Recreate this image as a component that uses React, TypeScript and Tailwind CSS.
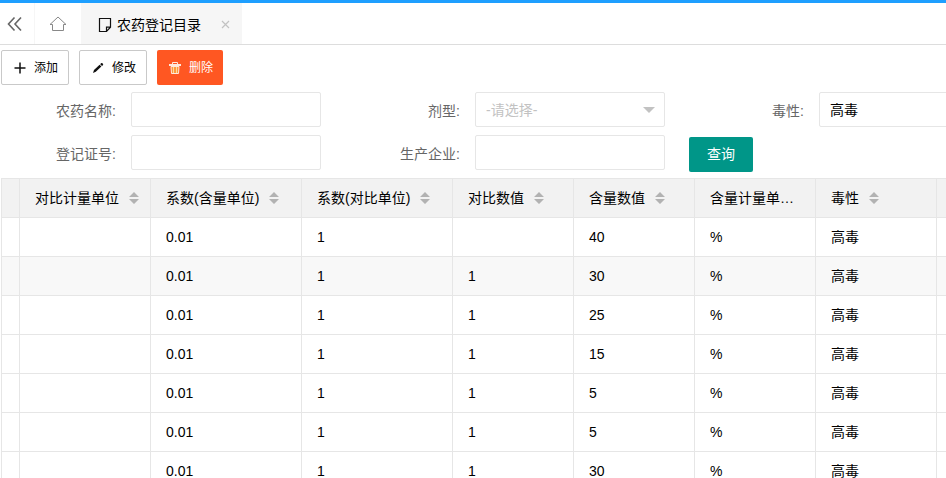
import { ReactNode } from 'react';
import clsx from 'clsx';

interface Column {
  key: keyof Row;
  title: string;
  width: string;
  sortable?: boolean;
}

interface Row {
  compareUnit: string;
  contentFactor: string;
  compareFactor: string;
  compareValue: string;
  contentValue: string;
  contentUnit: string;
  toxicity: string;
}

const columns: Column[] = [
  { key: 'compareUnit', title: '对比计量单位', width: 'w-[131px]', sortable: true },
  { key: 'contentFactor', title: '系数(含量单位)', width: 'w-[151px]', sortable: true },
  { key: 'compareFactor', title: '系数(对比单位)', width: 'w-[151px]', sortable: true },
  { key: 'compareValue', title: '对比数值', width: 'w-[121px]', sortable: true },
  { key: 'contentValue', title: '含量数值', width: 'w-[121px]', sortable: true },
  { key: 'contentUnit', title: '含量计量单位', width: 'w-[121px]', sortable: true },
  { key: 'toxicity', title: '毒性', width: 'w-[121px]', sortable: true },
];

const values: [string, string][] = [
  ['', '40'],
  ['1', '30'],
  ['1', '25'],
  ['1', '15'],
  ['1', '5'],
  ['1', '5'],
  ['1', '30'],
];

const rows: Row[] = values.map(([compareValue, contentValue]) => ({
  compareUnit: '',
  contentFactor: '0.01',
  compareFactor: '1',
  compareValue,
  contentValue,
  contentUnit: '%',
  toxicity: '高毒',
}));

const hoveredRow = 1;

function CollapseIcon() {
  return (
    <svg width="16" height="16" viewBox="0 0 16 16" fill="none" stroke="#666" strokeWidth="1.6">
      <path d="M7.500 1.500 1.500 8l6 6.500M14 1.500 8 8l6 6.500" />
    </svg>
  );
}

function HomeIcon() {
  return (
    <svg width="18" height="16" viewBox="0 0 18 16" fill="none" stroke="#888" strokeWidth="1">
      <path d="M3.500 8.500H1L9 1l8 7.500h-2.500v6h-11z" strokeLinejoin="round" />
    </svg>
  );
}

function NoteIcon() {
  return (
    <svg width="14" height="16" viewBox="0 0 14 16" fill="none" stroke="#111" strokeWidth="1.2">
      <path d="M1.500 1.500h11v8.700l-4 4.300h-7zM12.500 10.200h-4v4.300" />
    </svg>
  );
}

function PlusIcon() {
  return (
    <svg width="12" height="12" viewBox="0 0 12 12" fill="none" stroke="#111" strokeWidth="1.5">
      <path d="M6 .5v11M.5 6h11" />
    </svg>
  );
}

function PencilIcon() {
  return (
    <svg width="12" height="12" viewBox="0 0 12 12" fill="#111">
      <path d="M9 1.300a1 1 0 0 1 1.400 0l.5.5a1 1 0 0 1 0 1.400l-.9.800-1.800-1.800zM7.600 2.700l1.800 1.800-5.600 5.300L1 11l1-2.900z" />
    </svg>
  );
}

function TrashIcon() {
  return (
    <svg width="12" height="12" viewBox="0 0 12 12" fill="none" stroke="#ffe9dc" strokeWidth="1">
      <path d="M2 4.500h8l-.5 7h-7z" fill="#ff9a3c" />
      <path d="M0 3h12" strokeWidth="2" />
      <path d="M3.500 2V.5h5V2" />
      <path d="M4.500 5v6M7.500 5v6" stroke="#ffd9a0" />
    </svg>
  );
}

function SortIcon() {
  return (
    <svg className="ml-2.5 inline-block align-[-1px]" width="10" height="12" viewBox="0 0 10 12" fill="#b2b2b2">
      <path d="M5 0l5 5H0zM0 7h10l-5 5z" />
    </svg>
  );
}

function ToolButton({ icon, children, danger }: { icon: ReactNode; children: ReactNode; danger?: boolean }) {
  return (
    <button
      type="button"
      className={clsx(
        'flex h-[35px] items-center gap-2 rounded-xs pr-2.5 pl-3 text-xs',
        danger ? 'bg-[#ff5722] text-white' : 'border border-[#c9c9c9] bg-white text-black'
      )}
    >
      {icon}
      {children}
    </button>
  );
}

function Field({ id, label, children }: { id: string; label: string; children?: ReactNode }) {
  return (
    <div className="flex shrink-0">
      <label htmlFor={id} className="w-[130px] pr-[15px] text-right leading-[39px] text-[#666]">
        {label}:
      </label>
      {children ?? <input id={id} type="text" className="h-[35px] w-[190px] rounded-xs border border-[#e6e6e6] px-2.5 outline-none" />}
    </div>
  );
}

function Select({ id, value, placeholder }: { id: string; value: string; placeholder?: boolean }) {
  return (
    <div className="relative">
      <select
        id={id}
        defaultValue={value}
        className={clsx(
          'h-[35px] w-[190px] appearance-none rounded-xs border border-[#e6e6e6] bg-white px-2.5 outline-none',
          placeholder ? 'text-[#c2c2c2]' : 'text-black'
        )}
      >
        <option>{value}</option>
      </select>
      <svg className="pointer-events-none absolute top-[15px] right-2.5" width="12" height="6" viewBox="0 0 12 6" fill="#c2c2c2">
        <path d="M0 0h12L6 6z" />
      </svg>
    </div>
  );
}

export default function App() {
  return (
    <div className="h-screen overflow-hidden bg-white font-['Liberation_Sans','Noto_Sans_CJK_SC',sans-serif] text-sm text-black">
      {/* Page tabs */}
      <header className="flex h-[45px] border-t-3 border-b border-t-[#1e9fff] border-b-[#ddd]">
        <button type="button" aria-label="收起" className="flex w-[35px] items-center border-r border-[#f6f6f6] pl-[7px]">
          <CollapseIcon />
        </button>
        <button type="button" aria-label="首页" className="flex w-[46px] items-center justify-center">
          <HomeIcon />
        </button>
        <div className="flex w-[161px] items-center bg-[#f6f6f6] pt-0.5 pr-3 pl-[17px]">
          <NoteIcon />
          <span className="ml-[5px]">农药登记目录</span>
          <button type="button" aria-label="关闭" className="ml-auto">
            <svg width="9" height="9" viewBox="0 0 9 9" fill="none" stroke="#c2c2c2" strokeWidth="1.2">
              <path d="M1 1l7 7M8 1 1 8" />
            </svg>
          </button>
        </div>
      </header>

      <main className="pt-[5px] pl-px">
        <div className="flex gap-2.5">
          <ToolButton icon={<PlusIcon />}>添加</ToolButton>
          <ToolButton icon={<PencilIcon />}>修改</ToolButton>
          <ToolButton icon={<TrashIcon />} danger>
            删除
          </ToolButton>
        </div>

        {/* Search form */}
        <form className="mt-[7px] flex flex-col gap-2">
          <div className="flex h-[35px] gap-6">
            <Field id="name" label="农药名称" />
            <Field id="form" label="剂型">
              <Select id="form" value="-请选择-" placeholder />
            </Field>
            <Field id="toxicity" label="毒性">
              <Select id="toxicity" value="高毒" />
            </Field>
          </div>
          <div className="flex h-[35px] gap-6">
            <Field id="license" label="登记证号" />
            <Field id="company" label="生产企业" />
            <button type="button" className="mt-0.5 h-[35px] shrink-0 rounded-xs bg-[#009688] px-[18px] pb-0.5 text-white">
              查询
            </button>
          </div>
        </form>

        <table className="mt-2 w-full table-fixed border-separate border-spacing-0 border-t border-l border-[#e6e6e6]">
          <thead>
            <tr className="h-[39px] bg-[#f2f2f2]">
              <td className="w-[18px] border-r border-b border-[#e6e6e6]" />
              {columns.map((col) => (
                <th key={col.key} className={clsx('border-r border-b border-[#e6e6e6] pr-2.5 pl-[15px] text-left font-normal', col.width)}>
                  <div className="truncate">
                    {col.title}
                    {col.sortable && <SortIcon />}
                  </div>
                </th>
              ))}
              <td className="border-b border-[#e6e6e6]" />
            </tr>
          </thead>
          <tbody>
            {rows.map((row, index) => (
              <tr key={index} className={clsx('h-[39px]', index === hoveredRow && 'bg-[#f8f8f8]')}>
                <td className="border-r border-b border-[#e6e6e6]" />
                {columns.map((col) => (
                  <td key={col.key} className="border-r border-b border-[#e6e6e6] px-[15px]">
                    {row[col.key]}
                  </td>
                ))}
                <td className="border-b border-[#e6e6e6]" />
              </tr>
            ))}
          </tbody>
        </table>
      </main>
    </div>
  );
}
